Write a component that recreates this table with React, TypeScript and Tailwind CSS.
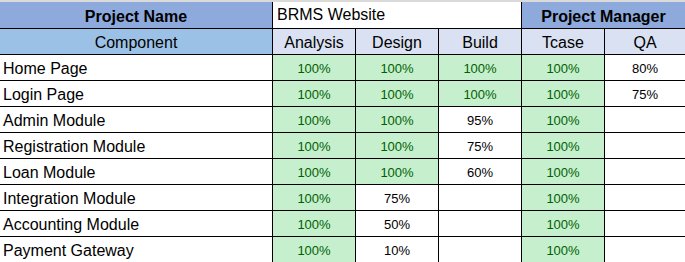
import React from 'react';

type Cell = { v: string; ok?: boolean };

const rows: { name: string; cells: Cell[] }[] = [
  { name: 'Home Page', cells: [{ v: '100%', ok: true }, { v: '100%', ok: true }, { v: '100%', ok: true }, { v: '100%', ok: true }, { v: '80%' }] },
  { name: 'Login Page', cells: [{ v: '100%', ok: true }, { v: '100%', ok: true }, { v: '100%', ok: true }, { v: '100%', ok: true }, { v: '75%' }] },
  { name: 'Admin Module', cells: [{ v: '100%', ok: true }, { v: '100%', ok: true }, { v: '95%' }, { v: '100%', ok: true }, { v: '' }] },
  { name: 'Registration Module', cells: [{ v: '100%', ok: true }, { v: '100%', ok: true }, { v: '75%' }, { v: '100%', ok: true }, { v: '' }] },
  { name: 'Loan Module', cells: [{ v: '100%', ok: true }, { v: '100%', ok: true }, { v: '60%' }, { v: '100%', ok: true }, { v: '' }] },
  { name: 'Integration Module', cells: [{ v: '100%', ok: true }, { v: '75%' }, { v: '' }, { v: '100%', ok: true }, { v: '' }] },
  { name: 'Accounting Module', cells: [{ v: '100%', ok: true }, { v: '50%' }, { v: '' }, { v: '100%', ok: true }, { v: '' }] },
  { name: 'Payment Gateway', cells: [{ v: '100%', ok: true }, { v: '10%' }, { v: '' }, { v: '100%', ok: true }, { v: '' }] },
];

const stages = ['Analysis', 'Design', 'Build', 'Tcase', 'QA'];

const App: React.FC = () => {
  return (
    <div className="w-[685px] h-[262px] overflow-hidden bg-white font-['Liberation_Sans',Arial,sans-serif] text-black">
      {/* sheet gridline strip above the table */}
      <div className="h-[2px] bg-[#dadada]" />

      <div className="grid grid-cols-[272px_82px_82px_82px_82px_80px] grid-rows-[26px_25px_repeat(8,25px)] gap-px bg-black">
        {/* title row */}
        <div className="bg-[#8ea9db] flex items-end justify-center pb-[2px] text-[16px] font-bold leading-[18px]">
          Project Name
        </div>
        <div className="col-span-3 bg-white flex items-end pl-[4px] pb-[4px] text-[16px] leading-[18px]">
          BRMS Website
        </div>
        <div className="col-span-2 bg-[#8ea9db] flex items-end justify-center pb-[2px] text-[16px] font-bold leading-[18px]">
          Project Manager
        </div>

        {/* column headers */}
        <div className="bg-[#9bc2e6] flex items-end justify-center pb-[2px] text-[16px] leading-[18px]">
          Component
        </div>
        {stages.map((s) => (
          <div key={s} className="bg-[#d9e1f2] flex items-end justify-center pb-[2px] text-[16px] leading-[18px]">
            {s}
          </div>
        ))}

        {/* data rows */}
        {rows.map((r) => (
          <React.Fragment key={r.name}>
            <div className="bg-white flex items-end pl-[3px] pb-[2px] text-[16px] leading-[18px]">{r.name}</div>
            {r.cells.map((c, i) => (
              <div
                key={i}
                className={
                  c.ok
                    ? 'bg-[#c6efce] text-[#006100] flex items-end justify-center pb-[4px] text-[13px] leading-[15px]'
                    : 'bg-white flex items-end justify-center pb-[4px] text-[13px] leading-[15px]'
                }
              >
                {c.v}
              </div>
            ))}
          </React.Fragment>
        ))}
      </div>
    </div>
  );
};

export default App;
